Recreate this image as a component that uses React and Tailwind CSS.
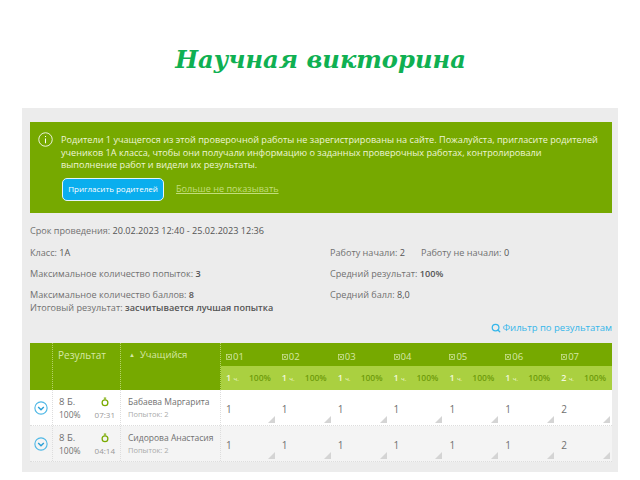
import { Search } from "lucide-react";

const questions = [
    { id: "01", count: 1 },
    { id: "02", count: 1 },
    { id: "03", count: 1 },
    { id: "04", count: 1 },
    { id: "05", count: 1 },
    { id: "06", count: 1 },
    { id: "07", count: 2 },
];

const students = [
    { name: "Бабаева Маргарита", time: "07:31", bg: "bg-white" },
    { name: "Сидорова Анастасия", time: "04:14", bg: "bg-[#f4f4f4]" },
];

const Chevron = () => (
    <svg viewBox="0 0 16 16" className="w-[14px] h-[14px]" fill="none">
        <circle cx="8" cy="8" r="7" stroke="#4fb8e6" strokeWidth="1.3" />
        <path d="M4.8 6.8 8 10l3.2-3.2" stroke="#2a9fd6" strokeWidth="1.6" />
    </svg>
);

const Timer = () => (
    <svg viewBox="0 0 10 12" className="w-[8px] h-[10px]" fill="none">
        <circle cx="5" cy="7" r="3.6" stroke="#7aaa00" strokeWidth="1.6" />
        <path d="M3.5 1h3M5 1v2" stroke="#7aaa00" strokeWidth="1.2" />
    </svg>
);

const CheckBox = () => (
    <svg viewBox="0 0 8 8" className="w-[6px] h-[6px] mr-[1px] shrink-0" fill="none" stroke="#d6e8a6" strokeWidth="0.9">
        <rect x="0.5" y="0.5" width="7" height="7" />
        <path d="M2 2l4 4M6 2 2 6" />
    </svg>
);

const Corner = () => (
    <span className="absolute right-[2px] bottom-[2px] w-0 h-0 border-l-[7px] border-l-transparent border-b-[7px] border-b-[#d4d4d4]" />
);

const App = () => {
    return (
        <div className="w-[640px] h-[480px] overflow-hidden bg-white font-['Open_Sans',sans-serif]">
            <h1 className="h-[108px] pt-[44px] pl-[1px] text-center text-[24.2px] leading-[32px] font-bold italic text-[#0fb052] font-['DejaVu_Serif',serif]">
                Научная викторина
            </h1>
            <div className="ml-[22px] w-[596px] h-[364px] bg-[#ececec] pt-[14px] pl-[8px] text-[9.1px] text-[#707070]">
                <div className="w-[582px] h-[91px] bg-[#76a900] flex gap-[8px] pt-[10px] pl-[8px] text-[#eef5d8]">
                    <svg viewBox="0 0 16 16" className="w-[15px] h-[15px] shrink-0" fill="none">
                        <circle cx="8" cy="8" r="7.2" stroke="#fff" strokeWidth="0.9" />
                        <path d="M8 4.2v1.2M8 7v5" stroke="#fff" strokeWidth="1.1" />
                    </svg>
                    <div className="pt-[2px]">
                        <p className="text-[9.15px] leading-[12.5px] whitespace-nowrap">
                            Родители 1 учащегося из этой проверочной работы не зарегистрированы на сайте. Пожалуйста, пригласите родителей
                            <br />
                            учеников 1А класса, чтобы они получали информацию о заданных проверочных работах, контролировали
                            <br />
                            выполнение работ и видели их результаты.
                        </p>
                        <div className="flex items-center gap-[12px] mt-[6px]">
                            <button className="ml-[1px] w-[102px] h-[23px] rounded-[5px] bg-[#0aaeee] border border-[#e4f4fa] text-white text-[8px]">
                                Пригласить родителей
                            </button>
                            <a className="text-[9.1px] underline text-[#c3de7c]">Больше не показывать</a>
                        </div>
                    </div>
                </div>

                <div className="flex mt-[9px] h-[96px]">
                    <div className="w-[300px]">
                        <p className="leading-[13px] mt-[2px]">
                            Срок проведения: <span className="font-medium text-[#555]">20.02.2023 12:40 - 25.02.2023 12:36</span>
                        </p>
                        <p className="leading-[13px] mt-[9px]">
                            Класс: <span className="font-medium text-[#555]">1А</span>
                        </p>
                        <p className="leading-[13px] mt-[8px]">
                            Максимальное количество попыток: <span className="font-semibold text-[#555]">3</span>
                        </p>
                        <p className="leading-[13px] mt-[8px]">
                            Максимальное количество баллов: <span className="font-semibold text-[#555]">8</span>
                        </p>
                        <p className="leading-[13px] whitespace-nowrap">
                            Итоговый результат: <span className="font-semibold text-[#555]">засчитывается лучшая попытка</span>
                        </p>
                    </div>
                    <div className="pt-[24px]">
                        <p className="leading-[13px]">
                            Работу начали: <span className="font-medium text-[#555]">2</span>
                            <span className="ml-[16px]">Работу не начали: <span className="font-medium text-[#555]">0</span></span>
                        </p>
                        <p className="leading-[13px] mt-[8px]">
                            Средний результат: <span className="font-semibold text-[#555]">100%</span>
                        </p>
                        <p className="leading-[13px] mt-[8px]">
                            Средний балл: <span className="font-medium text-[#555]">8,0</span>
                        </p>
                    </div>
                </div>

                <div className="w-[582px] h-[20px] flex justify-end items-center gap-[2px] text-[#35b6ea] text-[9.5px]">
                    <Search className="w-[10px] h-[10px]" strokeWidth={3} />
                    <span>Фильтр по результатам</span>
                </div>

                <div className="w-[582px] mt-[5px] text-[9.5px]">
                    <div className="flex h-[47px] bg-[#76a900] text-[#d6e8a6]">
                        <div className="w-[23px] border-r border-dotted border-[#b5d267]" />
                        <div className="w-[68px] pl-[5px] pt-[5px] text-[10px] border-r border-dotted border-[#b5d267]">Результат</div>
                        <div className="w-[100px] pl-[8px] pt-[5px] text-[9.5px] border-r border-dotted border-[#b5d267]">
                            <span className="text-[6px] align-[1px] mr-[5px]">▲</span>Учащийся
                        </div>
                        {questions.map((q) => (
                            <div key={q.id} className="flex-1 flex flex-col">
                                <div className="h-[23px] pl-[5px] pt-[5px] text-[9.5px] leading-[14px] flex items-center self-start">
                                    <CheckBox />
                                    {q.id}
                                </div>
                                <div className="h-[24px] bg-[#aad040] flex items-center justify-between pl-[5px] pr-[6px] text-[#f2f8dc] text-[9px] font-semibold">
                                    <span>{q.count} <span className="text-[6px] font-normal">ч.</span></span>
                                    <span className="text-[#6f9c0c] text-[8.5px]">100%</span>
                                </div>
                            </div>
                        ))}
                    </div>
                    {students.map((s) => (
                        <div key={s.name} className={`flex h-[36px] border-b border-dotted border-[#ddd] ${s.bg}`}>
                            <div className="w-[23px] pt-[1px] flex items-center justify-center border-r border-dotted border-[#ddd]">
                                <Chevron />
                            </div>
                            <div className="w-[68px] pl-[6px] pr-[5px] pt-[5px] flex justify-between border-r border-dotted border-[#ddd] text-[8.5px] leading-[13px]">
                                <div>
                                    <p className="text-[9.5px]">8 Б.</p>
                                    <p>100%</p>
                                </div>
                                <div className="flex flex-col items-center text-[#999] text-[8px]">
                                    <div className="h-[13px] flex items-center"><Timer /></div>
                                    <p>{s.time}</p>
                                </div>
                            </div>
                            <div className="w-[100px] pl-[7px] pt-[5px] border-r border-dotted border-[#ddd] leading-[13px] whitespace-nowrap">
                                <p className="text-[8.5px]">{s.name}</p>
                                <p className="text-[7.5px] text-[#aaa]">Попыток: 2</p>
                            </div>
                            {questions.map((q) => (
                                <div key={q.id} className="relative flex-1 pl-[5px] pt-[12px] text-[10px] leading-[14px]">
                                    {q.count}
                                    <Corner />
                                </div>
                            ))}
                        </div>
                    ))}
                </div>
            </div>
        </div>
    );
};

export default App;
